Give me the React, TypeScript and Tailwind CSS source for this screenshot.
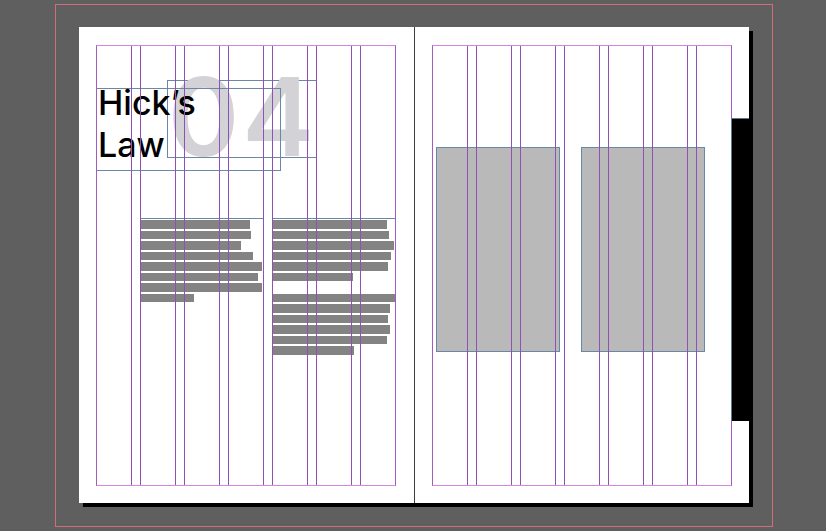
import React from 'react';

const leftBars = [109, 110, 100, 112, 121, 117, 121, 53];
const rightBars = [114, 116, 121, 118, 115, 80, 0, 122, 117, 115, 117, 114, 81];

// margin box + 7 column guides, drawn over the page content
const Guides: React.FC = () => (
  <div className="pointer-events-none absolute left-[17px] top-[18px] h-[441px] w-[300px]">
    <div className="grid h-full grid-cols-[repeat(7,36px)] gap-x-[8px]">
      {Array.from({ length: 7 }).map((_, i) => (
        <div key={i} className="h-full border-x border-[#8e52b4]" />
      ))}
    </div>
    <div className="absolute inset-0 border border-[#d585e4] border-x-[#a45cc2]" />
  </div>
);

const TextFrame: React.FC<{ bars: number[] }> = ({ bars }) => (
  <div className="flex w-[124px] flex-col gap-[2px] border-t border-[#6b87a6] pl-[1px] pt-[1px]">
    {bars.map((w, i) => (
      <div
        key={i}
        className={w ? 'h-[8.5px] bg-[#838383]' : 'h-[8.5px]'}
        style={{ width: w }}
      />
    ))}
  </div>
);

const App: React.FC = () => {
  return (
    <div className="h-[531px] w-[826px] overflow-hidden bg-[#5f5f5f] pl-[55px] pt-[4px]">
      <div className="h-[523px] w-[718px] border border-[#d16d78] pl-[23px] pt-[22px]">
        <div className="flex h-[476px] w-[670px] bg-white shadow-[4px_4px_0_0_#000]">
          {/* Left page */}
          <div className="relative h-full w-[335px] pl-[17px] pt-[53px]">
            <div className="relative h-[90px]">
              <div className="ml-[71px] h-[78px] w-[150px] border border-[#6b87a6]">
                <div
                  className="-mt-[18px] text-[108px] leading-[108px] font-semibold tracking-[3px] text-[#d3d3d7]"
                  style={{ fontFamily: 'Inter, "Noto Sans", sans-serif' }}
                >
                  04
                </div>
              </div>
              <div className="absolute left-0 top-[8px] h-[83px] w-[185px] border border-[#6b87a6] pl-[1px]">
                <div
                  className="-mt-[7px] text-[34px] leading-[42px] font-medium text-black"
                  style={{ fontFamily: 'Inter, "Noto Sans", sans-serif' }}
                >
                  Hick’s
                  <br />
                  Law
                </div>
              </div>
            </div>
            <div className="mt-[48px] flex gap-[8px] pl-[44px]">
              <TextFrame bars={leftBars} />
              <TextFrame bars={rightBars} />
            </div>
            <Guides />
          </div>

          {/* Spine */}
          <div className="h-full w-px bg-[#3c3c3c]" />

          {/* Right page */}
          <div className="relative h-full w-[334px] pl-[21px] pt-[120px]">
            <div className="flex gap-[21px]">
              <div className="h-[205px] w-[124px] border border-[#6b87a6] bg-[#b9b9b9]" />
              <div className="h-[205px] w-[124px] border border-[#6b87a6] bg-[#b9b9b9]" />
            </div>
            <Guides />
            <div className="absolute right-0 top-[91px] z-10 h-[303px] w-[18px] border-l border-t border-[#5d7894] bg-black" />
          </div>
        </div>
      </div>
    </div>
  );
};

export default App;
